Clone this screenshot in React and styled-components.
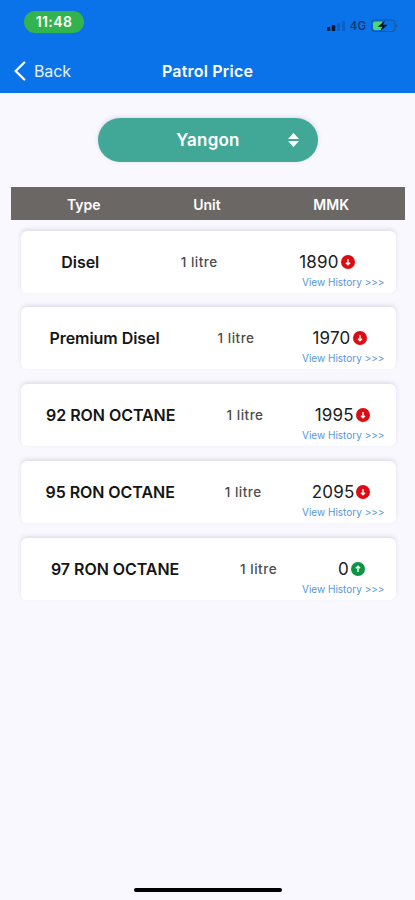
import React from 'react';
import styled, { createGlobalStyle } from 'styled-components';

const GlobalStyle = createGlobalStyle`
  * {
    box-sizing: border-box;
  }

  body {
    margin: 0;
    background-color: #f8f8fe;
    font-family: Inter, 'Liberation Sans', sans-serif;
  }
`;

const Screen = styled.div`
  display: flex;
  flex-direction: column;
  width: 415px;
  height: 900px;
  overflow: hidden;
  background-color: #f8f8fe;
`;

const Top = styled.header`
  flex: none;
  height: 93px;
  background-color: #0b73ea;
  color: white;
`;

const StatusBar = styled.div`
  display: flex;
  justify-content: space-between;
  align-items: flex-start;
  height: 49px;
  padding: 11px 17px 0 24px;
`;

const Time = styled.div`
  width: 60px;
  height: 22px;
  border-radius: 11px;
  background-color: #32b34d;
  font-size: 14px;
  font-weight: 600;
  line-height: 22px;
  letter-spacing: 0.4px;
  text-align: center;
`;

const StatusIcons = styled.div`
  display: flex;
  align-items: center;
  gap: 5px;
  height: 20px;
  margin-top: 5px;
  color: #0c3568;
  font-size: 11.5px;
  font-weight: 500;
`;

const NavBar = styled.div`
  display: grid;
  grid-template-columns: 1fr auto 1fr;
  align-items: center;
  height: 44px;
  padding: 0 14px;
`;

const Back = styled.div`
  display: flex;
  align-items: center;
  gap: 8px;
  color: #e6f0ff;
  font-size: 16px;
  letter-spacing: -0.1px;
`;

const Title = styled.div`
  font-size: 16px;
  font-weight: 600;
  letter-spacing: 0.2px;
`;

const CitySelect = styled.div`
  display: flex;
  flex: none;
  justify-content: center;
  align-items: center;
  position: relative;
  width: 220px;
  height: 44px;
  margin: 25px 0 0 98px;
  border-radius: 22px;
  background-color: #41a797;
  box-shadow: 0 -1px 4px rgba(60, 50, 90, 0.16);
  color: white;
  font-size: 17px;
  font-weight: 600;
  letter-spacing: 0.2px;
`;

const Sort = styled.svg`
  position: absolute;
  top: 15px;
  right: 19px;
`;

const TableHead = styled.div`
  display: flex;
  flex: none;
  justify-content: space-between;
  align-items: center;
  height: 33px;
  margin: 25px 10px 0 11px;
  padding: 2px 56px 0;
  background-color: #6b6765;
  color: white;
  font-size: 14px;
  font-weight: 600;
`;

const List = styled.div`
  display: flex;
  flex-direction: column;
  gap: 14.8px;
  padding: 10.5px 19.5px 0 20.5px;
`;

const Card = styled.div`
  height: 62px;
  padding-top: 19px;
  border-radius: 6px;
  background-color: white;
  box-shadow: 0 -2px 4px rgba(50, 40, 80, 0.12);
`;

const Row = styled.div`
  display: flex;
  justify-content: space-around;
  align-items: center;
  height: 24px;
`;

const Name = styled.div`
  color: #151515;
  font-size: 16px;
  font-weight: 600;
  letter-spacing: -0.05px;
`;

const Unit = styled.div`
  color: #4c4c4c;
  font-size: 13.5px;
  font-weight: 500;
  letter-spacing: 0.5px;
`;

const Price = styled.div`
  display: flex;
  align-items: center;
  gap: 2px;
  color: #202020;
  font-size: 17px;
  letter-spacing: 0.2px;
`;

const History = styled.div`
  margin-right: 11px;
  color: #5796d5;
  font-size: 10px;
  line-height: 12px;
  text-align: right;
  margin-top: 2px;
`;

const HomeBar = styled.div`
  width: 148px;
  height: 4px;
  margin: auto auto 8px;
  border-radius: 2px;
  background-color: #000;
`;

const prices = [
  { name: 'Disel', price: 1890 },
  { name: 'Premium Disel', price: 1970 },
  { name: '92 RON OCTANE', price: 1995 },
  { name: '95 RON OCTANE', price: 2095 },
  { name: '97 RON OCTANE', price: 0, up: true },
];

const Trend = ({ up }) => (
  <svg width="14" height="14" viewBox="0 0 14 14">
    <circle cx="7" cy="7" r="7" fill={up ? '#0b9444' : '#dd0b12'} />
    <path
      d={up ? 'M7 10V4.5M5 6.3L7 4.2L9 6.3' : 'M7 4V9.5M5 7.7L7 9.8L9 7.7'}
      fill="none"
      stroke="white"
      strokeWidth="1.4"
    />
  </svg>
);

const Signal = () => (
  <svg width="18" height="10" viewBox="0 0 18 10">
    <rect x="0" y="6" width="3.3" height="4" rx="0.8" fill="#061832" />
    <rect x="4.7" y="4" width="3.6" height="6" rx="0.8" fill="#061832" />
    <rect x="10" y="2" width="3" height="8" rx="0.8" fill="#0a60c2" />
    <rect x="15" y="0" width="3" height="10" rx="0.8" fill="#0a60c2" />
  </svg>
);

const Battery = () => (
  <svg width="27" height="14" viewBox="0 0 27 14">
    <rect x="0.7" y="1" width="23.3" height="11.5" rx="3.2" fill="none" stroke="#1b5994" strokeWidth="1.2" />
    <path d="M25.2 5v3.6c1.4-.6 1.4-3 0-3.6z" fill="#1b5994" />
    <path d="M4 2.5h7v8.5H4a2 2 0 0 1-2-2v-4.5a2 2 0 0 1 2-2z" fill="#4bd873" />
    <path d="M14 1.5L6.8 7.7h4.4L9.2 12.2L16.8 5.8h-4.5z" fill="#04152b" />
  </svg>
);

const App = () => {
  return (
    <Screen>
      <GlobalStyle />
      <Top>
        <StatusBar>
          <Time>11:48</Time>
          <StatusIcons>
            <Signal />
            <span>4G</span>
            <Battery />
          </StatusIcons>
        </StatusBar>
        <NavBar>
          <Back>
            <svg width="12" height="20" viewBox="0 0 12 20">
              <path d="M10.3 1.5L1.6 10L10.3 18.5" fill="none" stroke="white" strokeWidth="2.3" strokeLinecap="round" strokeLinejoin="round" />
            </svg>
            Back
          </Back>
          <Title>Patrol Price</Title>
        </NavBar>
      </Top>
      <CitySelect>
        Yangon
        <Sort width="11" height="14" viewBox="0 0 11 14">
          <path d="M5.5 0L11 6H0zM0 8h11L5.5 14z" fill="white" />
        </Sort>
      </CitySelect>
      <TableHead>
        <div>Type</div>
        <div>Unit</div>
        <div>MMK</div>
      </TableHead>
      <List>
        {prices.map((item) => (
          <Card key={item.name}>
            <Row>
              <Name>{item.name}</Name>
              <Unit>1 litre</Unit>
              <Price>
                {item.price}
                <Trend up={item.up} />
              </Price>
            </Row>
            <History>View History &gt;&gt;&gt;</History>
          </Card>
        ))}
      </List>
      <HomeBar />
    </Screen>
  );
};

export default App;
